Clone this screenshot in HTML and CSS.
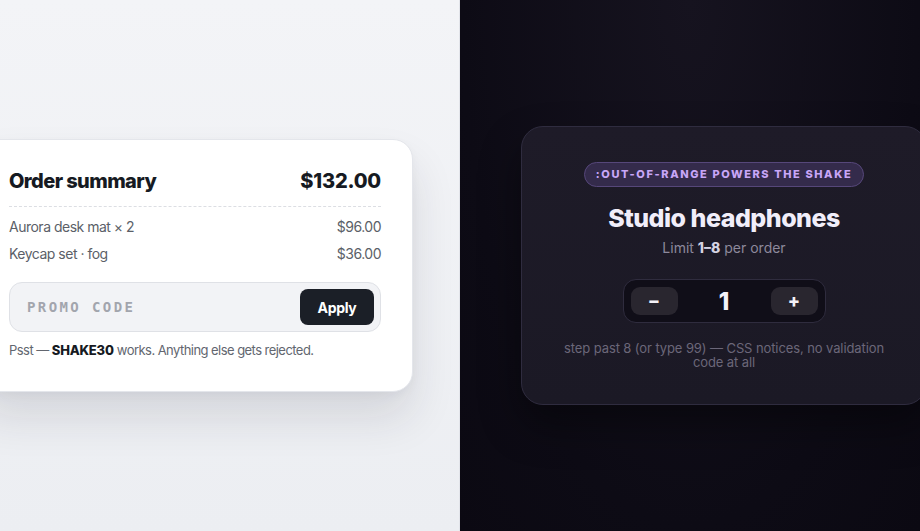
FILE: index.html
```html
<!DOCTYPE html>
<html>
<head>
<meta charset="utf-8">
<link rel="stylesheet" href="styles.css">
</head>
<body>
<div class="split">
  <section class="pane light">
    <div class="card">
      <div class="head">
        <h1>Order summary</h1>
        <span class="total">$132.00</span>
      </div>
      <div class="row"><span>Aurora desk mat × 2</span><span>$96.00</span></div>
      <div class="row"><span>Keycap set · fog</span><span>$36.00</span></div>
      <div class="promo">
        <span class="ph">PROMO CODE</span>
        <button class="apply">Apply</button>
      </div>
      <p class="hint">Psst — <b>SHAKE30</b> works. Anything else gets rejected.</p>
    </div>
  </section>
  <section class="pane dark">
    <div class="dcard">
      <span class="badge">:OUT-OF-RANGE POWERS THE SHAKE</span>
      <h2>Studio headphones</h2>
      <p class="limit">Limit <b>1–8</b> per order</p>
      <div class="stepper">
        <button class="step">−</button>
        <span class="qty">1</span>
        <button class="step">+</button>
      </div>
      <p class="note">step past 8 (or type 99) — CSS notices, no validation code at all</p>
    </div>
  </section>
</div>
</body>
</html>
```
FILE: styles.css
```css
* { box-sizing: border-box; }
html, body { margin: 0; padding: 0; width: 920px; height: 531px; overflow: hidden; }
body { font-family: Inter, "Liberation Sans", sans-serif; }
.split { display: grid; grid-template-columns: 460px 460px; height: 531px; }
.pane { height: 531px; overflow: hidden; }
.light {
  background: linear-gradient(180deg, #f3f4f7 0%, #eceef2 100%);
  border-right: 1px solid #e2e4ea;
  padding-top: 139px;
}
.card {
  width: 436px;
  margin-left: -23px;
  height: 253px;
  background: #fff;
  border: 1px solid #e4e6eb;
  border-radius: 20px;
  padding: 28px 31px 0 31px;
  box-shadow: 0 26px 44px rgba(30, 35, 50, 0.12), 0 4px 10px rgba(30,35,50,0.04);
}
.head {
  display: flex; justify-content: space-between; align-items: center;
  padding-bottom: 12px;
  border-bottom: 1px dashed #dcdee3;
  margin-bottom: 10px;
}
h1 { margin: 0; font-size: 20px; font-weight: 800; color: #161a22; letter-spacing: -0.6px; line-height: 26px; }
.total { font-size: 20px; font-weight: 800; color: #161a22; letter-spacing: -0.2px; }
.row { display: flex; justify-content: space-between; font-size: 14px; color: #5b5f68; line-height: 19px; margin-bottom: 8px; letter-spacing: -0.5px; }
.promo {
  margin-top: 19px;
  height: 50px;
  display: flex; align-items: center; justify-content: space-between;
  background: #f2f3f6;
  border: 1px solid #dfe1e6;
  border-radius: 13px;
  padding: 0 6px 0 17px;
}
.ph { font-family: "DejaVu Sans Mono", monospace; font-size: 14px; letter-spacing: 2.4px; color: #a2a5ad; font-weight: 600; }
.apply {
  border: 0; background: #1b1f27; color: #fff;
  font-family: Inter, sans-serif; font-weight: 700; font-size: 14px;
  width: 74px; height: 36px; border-radius: 8px; letter-spacing: -0.3px;
}
.hint { margin: 10px 0 0; font-size: 13px; color: #62666f; letter-spacing: -0.55px; }
.hint b { color: #161a22; font-weight: 800; letter-spacing: -0.2px; }

.dark {
  background: radial-gradient(ellipse at 50% 0%, #16131f 0%, #0d0b15 70%, #0b0912 100%);
  padding-top: 126px;
}
.dcard {
  width: 406px;
  height: 279px;
  margin-left: 61px;
  background: linear-gradient(180deg, #1e1b28 0%, #1b1925 100%);
  border: 1px solid #2f2c3f;
  border-radius: 22px;
  display: flex; flex-direction: column; align-items: center;
  padding-top: 35px;
  box-shadow: 0 20px 40px rgba(0,0,0,0.4);
}
.badge {
  display: inline-block;
  height: 25px; line-height: 23px;
  padding: 0 11px;
  background: #342b4b;
  border: 1px solid #56477a;
  border-radius: 13px;
  color: #c8a6f7;
  font-size: 11px; font-weight: 800; letter-spacing: 1.6px;
}
h2 { margin: 16px 0 0; font-size: 25px; font-weight: 800; color: #f1eefa; letter-spacing: -0.5px; line-height: 30px; }
.limit { margin: 6px 0 0; font-size: 14px; color: #8d899c; line-height: 18px; }
.limit b { color: #d6d3e2; font-weight: 800; }
.stepper {
  margin-top: 22px;
  width: 203px; height: 44px;
  background: #100e18;
  border: 1px solid #2f2c3e;
  border-radius: 13px;
  display: flex; align-items: center; justify-content: space-between;
  padding: 0 7px;
}
.step {
  width: 47px; height: 28px; border: 0; border-radius: 9px;
  background: #29262f; color: #f4f2f8;
  font-family: Inter, sans-serif; font-size: 18px; font-weight: 800; line-height: 28px; padding: 0;
}
.qty { font-size: 24px; font-weight: 800; color: #f4f2f8; }
.note { margin: 18px 0 0; width: 330px; text-align: center; font-size: 13px; color: #6b6779; line-height: 14px; letter-spacing: -0.1px; }
```
